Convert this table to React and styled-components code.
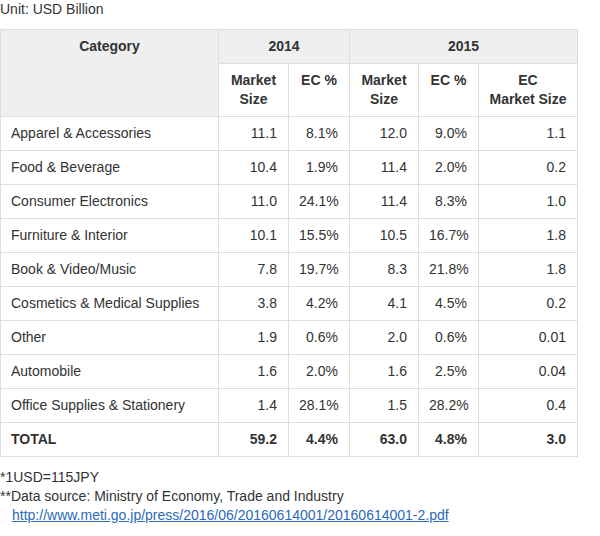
import React from 'react';
import styled, { createGlobalStyle } from 'styled-components';

const GlobalStyle = createGlobalStyle`
  body {
    margin: 0;
    background: #fff;
    font-family: "Liberation Sans", Arial, Helvetica, sans-serif;
    font-size: 14px;
    color: #333;
  }
`;

const rows = [
  ['Apparel & Accessories', '11.1', '8.1%', '12.0', '9.0%', '1.1'],
  ['Food & Beverage', '10.4', '1.9%', '11.4', '2.0%', '0.2'],
  ['Consumer Electronics', '11.0', '24.1%', '11.4', '8.3%', '1.0'],
  ['Furniture & Interior', '10.1', '15.5%', '10.5', '16.7%', '1.8'],
  ['Book & Video/Music', '7.8', '19.7%', '8.3', '21.8%', '1.8'],
  ['Cosmetics & Medical Supplies', '3.8', '4.2%', '4.1', '4.5%', '0.2'],
  ['Other', '1.9', '0.6%', '2.0', '0.6%', '0.01'],
  ['Automobile', '1.6', '2.0%', '1.6', '2.5%', '0.04'],
  ['Office Supplies & Stationery', '1.4', '28.1%', '1.5', '28.2%', '0.4'],
];

const total = ['TOTAL', '59.2', '4.4%', '63.0', '4.8%', '3.0'];

function App() {
  return (
    <Page>
      <GlobalStyle />
      <Unit>Unit: USD Billion</Unit>
      <Table>
        <colgroup>
          <col style={{ width: 218 }} />
          <col style={{ width: 70 }} />
          <col style={{ width: 61 }} />
          <col style={{ width: 69 }} />
          <col style={{ width: 60 }} />
          <col style={{ width: 99 }} />
        </colgroup>
        <thead>
          <tr>
            <Head rowSpan={2} $shade>Category</Head>
            <Head colSpan={2} $shade>2014</Head>
            <Head colSpan={3} $shade>2015</Head>
          </tr>
          <tr>
            <Head>Market<br />Size</Head>
            <Head>EC %</Head>
            <Head>Market<br />Size</Head>
            <Head>EC %</Head>
            <Head>EC<br />Market Size</Head>
          </tr>
        </thead>
        <tbody>
          {rows.map((r) => (
            <tr key={r[0]}>
              <Cell>{r[0]}</Cell>
              {r.slice(1).map((v, i) => (
                <Cell key={i} $num>{v}</Cell>
              ))}
            </tr>
          ))}
          <tr>
            <Cell $bold>{total[0]}</Cell>
            {total.slice(1).map((v, i) => (
              <Cell key={i} $num $bold>{v}</Cell>
            ))}
          </tr>
        </tbody>
      </Table>
      <Notes>
        <div>*1USD=115JPY</div>
        <div>**Data source: Ministry of Economy, Trade and Industry</div>
        <Link href="#">http://www.meti.go.jp/press/2016/06/20160614001/20160614001-2.pdf</Link>
      </Notes>
    </Page>
  );
}

const Page = styled.div`
  width: 600px;
`;

const Unit = styled.div`
  line-height: 19px;
  margin-bottom: 10px;
`;

const Table = styled.table`
  border-collapse: collapse;
  table-layout: fixed;
  width: 578px;
  font-size: 14px;
  line-height: 19px;
`;

const Head = styled.th`
  border: 1px solid #ddd;
  background: ${(p) => (p.$shade ? '#efefef' : '#fff')};
  padding: 7px 6px;
  font-weight: bold;
  text-align: center;
  vertical-align: top;
  color: #333;
`;

const Cell = styled.td`
  border: 1px solid #ddd;
  padding: 7px 11px 7px 10px;
  text-align: ${(p) => (p.$num ? 'right' : 'left')};
  font-weight: ${(p) => (p.$bold ? 'bold' : 'normal')};
  white-space: nowrap;
`;

const Notes = styled.div`
  margin-top: 11px;
  line-height: 19px;
`;

const Link = styled.a`
  display: block;
  padding-left: 12px;
  color: #2a6ab8;
  text-decoration: underline;
`;

export default App;
